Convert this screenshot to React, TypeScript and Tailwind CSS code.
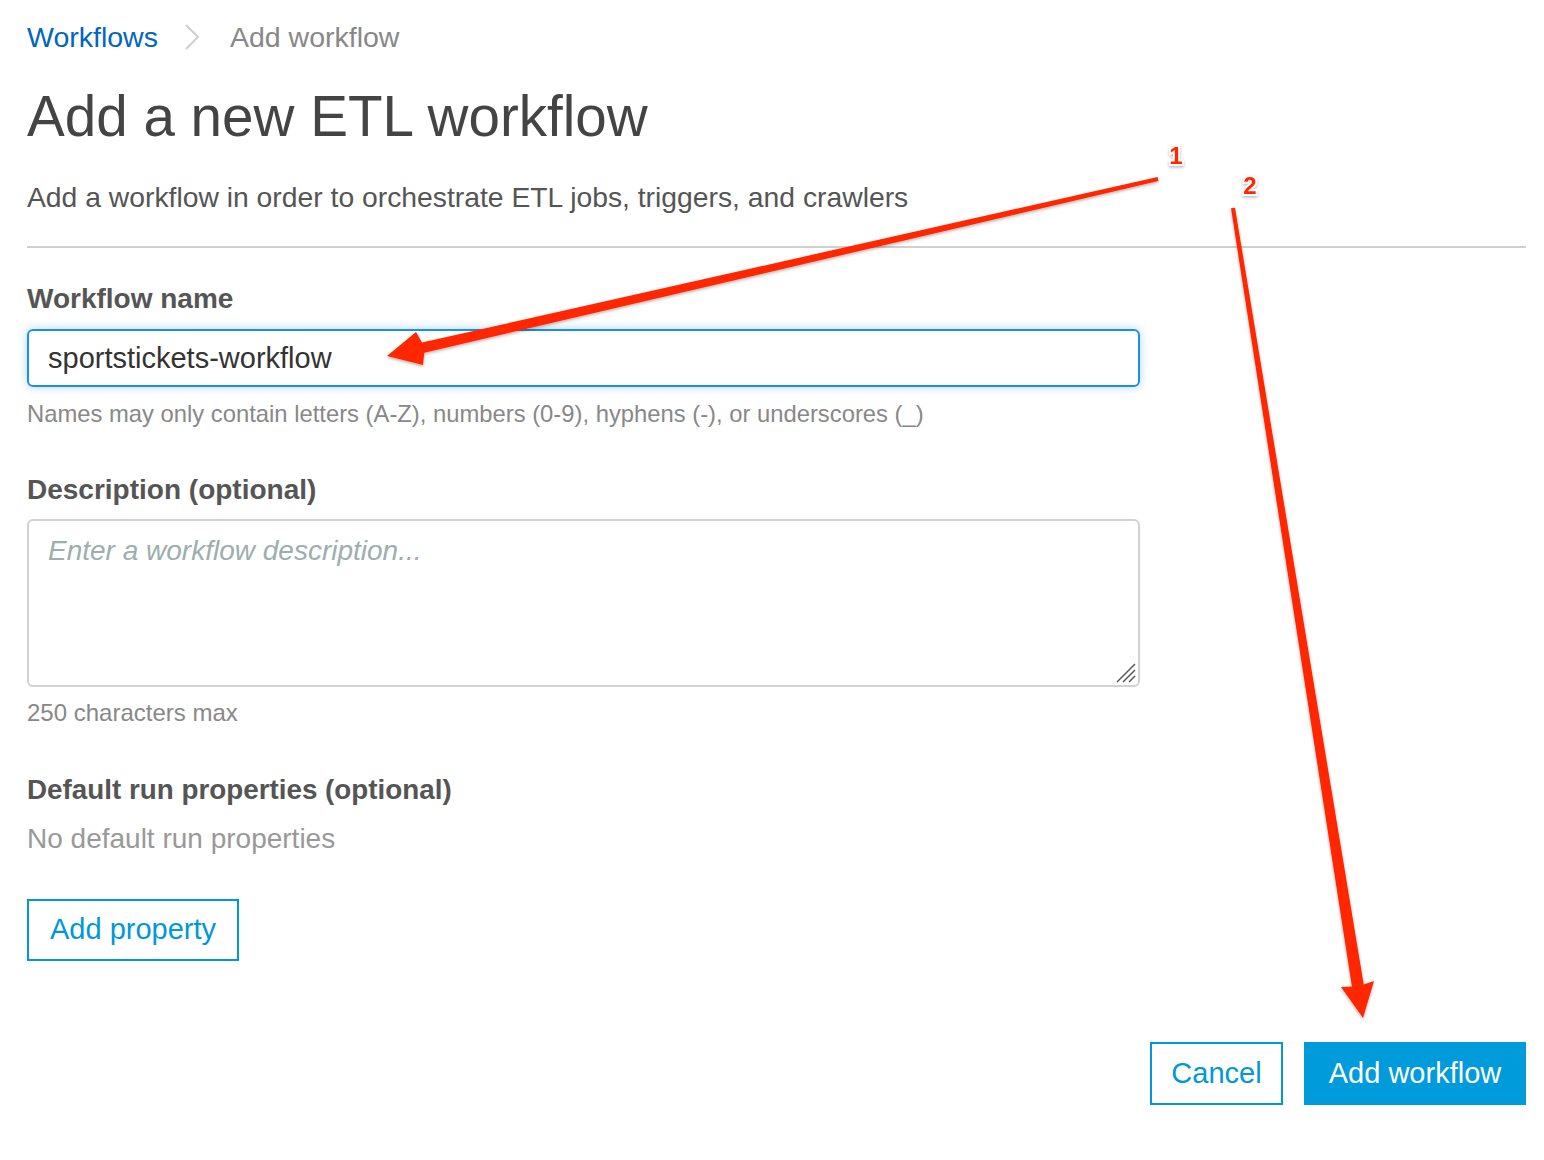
import React from "react";

const font = { fontFamily: '"Liberation Sans", Arial, Helvetica, sans-serif' };

function Annotations() {
  return (
    <svg
      className="pointer-events-none absolute left-0 top-0"
      width={1544}
      height={1160}
      viewBox="0 0 1544 1160"
    >
      <defs>
        <filter id="shadow" x="-10%" y="-10%" width="120%" height="120%">
          <feDropShadow dx="0" dy="1.5" stdDeviation="1.5" floodColor="#000" floodOpacity="0.3" />
        </filter>
      </defs>
      <g fill="#ff2600" filter="url(#shadow)">
        <polygon points="1157.6,177 422,342.6 416,332 387,356 423,365 424.3,352.8 1158.4,181" />
        <polygon points="1231,208.3 1351.9,986.4 1341,987 1363,1018 1374,981 1363.7,984.5 1235,207.7" />
      </g>
      <g
        fill="#ff2600"
        stroke="#fff"
        strokeWidth={3.5}
        paintOrder="stroke"
        fontWeight="bold"
        fontSize={24}
        textAnchor="middle"
        filter="url(#shadow)"
        style={font}
      >
        <text x={1176} y={164}>1</text>
        <text x={1250} y={194}>2</text>
      </g>
    </svg>
  );
}

export default function App() {
  return (
    <div className="relative min-h-screen bg-white" style={font}>
      <div className="pl-[27px] pr-[18px] pt-[17px]">
        {/* breadcrumb */}
        <nav className="flex items-center text-[28.5px] leading-[40px]">
          <a className="text-[#0066c0]">Workflows</a>
          <svg className="ml-[26px] mr-[30px]" width="16" height="28" viewBox="0 0 16 28">
            <path d="M2 2 L14 14 L2 26" fill="none" stroke="#cfcfcf" strokeWidth="2" />
          </svg>
          <span className="text-[#888]">Add workflow</span>
        </nav>

        <h1 className="mt-[25px] text-[56.6px] leading-[70px] text-[#444]">Add a new ETL workflow</h1>
        <p className="mt-[27px] text-[28.3px] leading-[36px] text-[#555]">
          Add a workflow in order to orchestrate ETL jobs, triggers, and crawlers
        </p>
        <div className="mt-[31px] h-[2px] bg-[#d0d0d0]" />

        <div className="w-[1113px]">
          <label className="mt-[33px] block text-[28px] font-bold leading-[36px] text-[#555]">
            Workflow name
          </label>
          <input
            readOnly
            value="sportstickets-workflow"
            className="mt-[12px] block h-[58px] w-full rounded-[6px] border-2 border-[#1a8fe3] px-[19px] text-[29px] text-[#333] shadow-[0_0_10px_rgba(30,140,230,0.35)] outline-none"
            style={font}
          />
          <p className="mt-[11px] text-[23.8px] leading-[32px] text-[#888]">
            Names may only contain letters (A-Z), numbers (0-9), hyphens (-), or underscores (_)
          </p>

          <label className="mt-[42px] block text-[28px] font-bold leading-[36px] text-[#555]">
            Description (optional)
          </label>
          <div className="relative mt-[11px]">
            <textarea
              placeholder="Enter a workflow description..."
              className="block h-[168px] w-full resize-none rounded-[6px] border-2 border-[#d2d2d2] px-[19px] pt-[12px] text-[28px] leading-[36px] text-[#333] outline-none placeholder:italic placeholder:text-[#9caeae]"
              style={font}
            />
            <svg className="absolute bottom-[3px] right-[3px]" width="24" height="24" viewBox="0 0 24 24">
              <g stroke="#555" strokeWidth="1.5">
                <line x1="22" y1="4" x2="4" y2="22" />
                <line x1="22" y1="10" x2="10" y2="22" />
                <line x1="22" y1="16" x2="16" y2="22" />
              </g>
            </svg>
          </div>
          <p className="mt-[10px] text-[24px] leading-[32px] text-[#888]">250 characters max</p>

          <label className="mt-[43px] block text-[27.8px] font-bold leading-[36px] text-[#555]">
            Default run properties (optional)
          </label>
          <p className="mt-[13px] text-[28px] leading-[36px] text-[#999]">No default run properties</p>
          <button className="mt-[42px] flex h-[62px] w-[212px] items-center justify-center border-2 border-[#0098d8] text-[29px] text-[#0098d8]">
            Add property
          </button>
        </div>

        <div className="mt-[81px] flex justify-end gap-[21px]">
          <button className="flex h-[63px] w-[133px] items-center justify-center border-2 border-[#0098d8] text-[29px] text-[#0098d8]">
            Cancel
          </button>
          <button className="flex h-[63px] w-[222px] items-center justify-center bg-[#009bdb] text-[29px] text-white">
            Add workflow
          </button>
        </div>
      </div>
      <Annotations />
    </div>
  );
}
